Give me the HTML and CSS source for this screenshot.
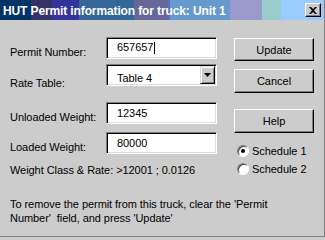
FILE: index.html
```html
<!DOCTYPE html>
<html>
<head>
<meta charset="utf-8">
<link rel="stylesheet" href="styles.css">
</head>
<body>
<div class="dialog">
  <div class="titlebar">
    <span class="title">HUT Permit information for truck: Unit 1</span>
    <span class="close">
      <svg width="8" height="7" viewBox="0 0 8 7"><path d="M0 0h2l2 2 2-2h2L5 3.5 8 7H6L4 5 2 7H0l3-3.5z" fill="#000"/></svg>
    </span>
  </div>
  <div class="body">
    <div class="form">
      <div class="row r1">
        <span class="label">Permit Number:</span>
        <span class="field f1">657657<span class="caret"></span></span>
      </div>
      <div class="row r2">
        <span class="label l2">Rate Table:</span>
        <span class="field select">Table 4
          <span class="drop"><svg width="7" height="4" viewBox="0 0 7 4"><path d="M0 0h7L3.5 4z" fill="#000"/></svg></span>
        </span>
      </div>
      <div class="row r3">
        <span class="label">Unloaded Weight:</span>
        <span class="field">12345</span>
      </div>
      <div class="row r4">
        <span class="label">Loaded Weight:</span>
        <span class="field">80000</span>
      </div>
      <div class="rate">Weight Class &amp; Rate: &gt;12001 ; 0.0126</div>
    </div>
    <div class="actions">
      <button class="btn b-update">Update</button>
      <button class="btn b-cancel">Cancel</button>
      <button class="btn b-help">Help</button>
      <div class="radio r-first"><span class="dot on"></span>Schedule 1</div>
      <div class="radio"><span class="dot"></span>Schedule 2</div>
    </div>
  </div>
  <p class="note">To remove the permit from this truck, clear the 'Permit<br>Number'&nbsp; field, and press 'Update'</p>
</div>
</body>
</html>
```
FILE: styles.css
```css
html, body {
  margin: 0;
  padding: 0;
  background: #cccccc;
}
.dialog {
  width: 324px;
  height: 236px;
  background: #cccccc;
  border-right: 1px solid #808080;
  border-bottom: 1px solid #808080;
  font-family: "Liberation Sans", Arial, sans-serif;
  font-size: 11px;
  letter-spacing: -0.06px;
  color: #000;
  overflow: hidden;
}
.titlebar {
  height: 20px;
  display: flex;
  align-items: center;
  justify-content: space-between;
  padding: 0 3px 0 3px;
  box-sizing: border-box;
  background: linear-gradient(to right,
    #003366 0, #003366 31px,
    #333366 31px, #333366 52px,
    #333399 52px, #333399 79px,
    #336699 79px, #336699 134px,
    #666699 134px, #666699 168px,
    #6666cc 168px, #6666cc 170px,
    #6699cc 170px, #6699cc 230px,
    #9999cc 230px, #9999cc 262px,
    #99cccc 262px, #99cccc 281px,
    #99ccff 281px, #99ccff 100%);
}
.title {
  color: #fff;
  font-weight: bold;
  font-size: 12px;
  letter-spacing: -0.12px;
  white-space: nowrap;
  padding-top: 1px;
}
.close {
  width: 16px;
  height: 14px;
  box-sizing: border-box;
  background: #cccccc;
  border-top: 1px solid #fff;
  border-left: 1px solid #fff;
  border-right: 1px solid #000;
  border-bottom: 1px solid #000;
  box-shadow: inset -1px -1px 0 #808080;
  display: flex;
  align-items: center;
  justify-content: center;
  padding-right: 1px;
}
.close svg { display: block; }
.body {
  display: flex;
}
.form {
  width: 234px;
  padding-top: 17px;
}
.row {
  display: flex;
  align-items: flex-start;
  height: 22px;
}
.r2 { margin-top: 5px; }
.r3 { margin-top: 16px; }
.r4 { margin-top: 8px; }
.label {
  width: 106px;
  flex: none;
  padding-left: 10px;
  box-sizing: border-box;
  padding-top: 9px;
  line-height: 13px;
  white-space: nowrap;
}
.l2 { padding-top: 13px; }
.field {
  position: relative;
  width: 111px;
  height: 22px;
  flex: none;
  box-sizing: border-box;
  background: #fff;
  border-top: 1px solid #808080;
  border-left: 1px solid #808080;
  border-right: 1px solid #fff;
  border-bottom: 1px solid #fff;
  box-shadow: inset 1px 1px 0 #000, inset -1px -1px 0 #dcdcdc;
  padding-left: 10px;
  padding-top: 4px;
  line-height: 13px;
}
.f1 { padding-top: 3px; }
.caret {
  display: inline-block;
  width: 1px;
  height: 12px;
  background: #000;
  vertical-align: top;
  margin-top: 1px;
  margin-left: 1px;
}
.select { padding-top: 7px; }
.drop {
  position: absolute;
  right: 1px;
  top: 1px;
  width: 15px;
  height: 18px;
  box-sizing: border-box;
  background: #cccccc;
  border-top: 1px solid #dcdcdc;
  border-left: 1px solid #dcdcdc;
  border-right: 1px solid #000;
  border-bottom: 1px solid #000;
  box-shadow: inset 1px 1px 0 #fff, inset -1px -1px 0 #808080;
  display: flex;
  align-items: center;
  justify-content: center;
}
.drop svg { display: block; }
.rate {
  margin-top: 10px;
  padding-left: 10px;
  line-height: 13px;
  white-space: nowrap;
}
.actions {
  padding-top: 18px;
  display: flex;
  flex-direction: column;
}
.btn {
  width: 80px;
  height: 23px;
  margin: 0;
  padding: 0;
  font: inherit;
  color: #000;
  background: #cccccc;
  border-top: 1px solid #fff;
  border-left: 1px solid #fff;
  border-right: 1px solid #000;
  border-bottom: 1px solid #000;
  box-shadow: inset -1px -1px 0 #808080;
  text-align: center;
}
.b-cancel { margin-top: 8px; height: 24px; }
.b-help { margin-top: 16px; height: 24px; }
.radio {
  display: flex;
  align-items: center;
  height: 12px;
  margin-top: 6px;
  margin-left: 3px;
  white-space: nowrap;
}
.r-first { margin-top: 12px; }
.dot {
  width: 12px;
  height: 12px;
  flex: none;
  box-sizing: border-box;
  border-radius: 50%;
  background: #fff;
  border: 1px solid;
  border-color: #808080 #fff #fff #808080;
  box-shadow: inset 1px 1px 0 #404040;
  margin-right: 3px;
  display: flex;
  align-items: center;
  justify-content: center;
}
.dot.on::after {
  content: "";
  width: 4px;
  height: 4px;
  border-radius: 50%;
  background: #000;
}
.note {
  margin: 0;
  padding: 20px 0 0 10px;
  line-height: 14px;
  white-space: nowrap;
}
```
